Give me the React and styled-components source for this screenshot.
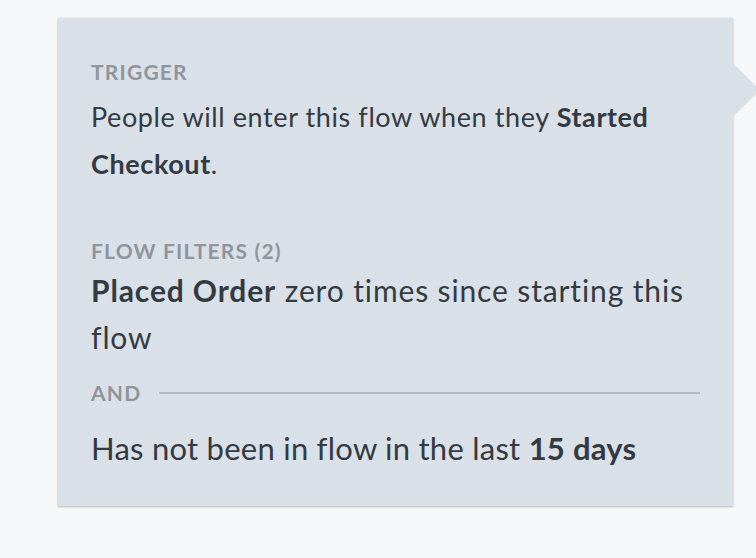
import React from 'react';
import styled, { createGlobalStyle } from 'styled-components';

const GlobalStyle = createGlobalStyle`
  html, body {
    margin: 0;
    padding: 0;
    background: #f6f7f9;
  }
  body {
    font-family: 'Lato', 'Open Sans', sans-serif;
    -webkit-font-smoothing: antialiased;
  }
`;

const Page = styled.div`
  width: 756px;
  height: 558px;
  box-sizing: border-box;
  padding: 18px 0 0 58px;
  overflow: hidden;
`;

// 툴팁 카드 (오른쪽 화살표 포함)
const Card = styled.div`
  position: relative;
  width: 675px;
  box-sizing: border-box;
  padding: 42px 33px 34px;
  background: #dae0e7;
  box-shadow: 0 1px 2px rgba(40, 50, 60, 0.28), 0 0 1px rgba(40, 50, 60, 0.12);
  color: #333a42;

  &::after {
    content: '';
    position: absolute;
    top: 45px;
    right: -27px;
    width: 0;
    height: 0;
    border-top: 27px solid transparent;
    border-bottom: 27px solid transparent;
    border-left: 27px solid #dae0e7;
  }
`;

const Label = styled.div`
  font-size: 21px;
  line-height: 24px;
  font-weight: 700;
  letter-spacing: 1.2px;
  color: #8e959c;
  text-transform: uppercase;
  margin-top: ${p => p.$top || 0}px;
`;

const Text = styled.p`
  margin: ${p => p.$top || 0}px 0 0;
  font-size: ${p => p.$size || 27}px;
  letter-spacing: ${p => p.$spacing || 0}px;
  line-height: 47px;
  font-weight: 400;

  b {
    font-weight: 700;
  }
`;

const Divider = styled.div`
  display: flex;
  align-items: center;
  gap: 18px;
  margin-top: 20px;

  &::after {
    content: '';
    flex: 1;
    height: 2px;
    background: #b3b9c0;
  }
`;

export default function App() {
  return (
    <>
      <GlobalStyle />
      <Page>
        <Card>
          <Label>Trigger</Label>
          <Text $top={9} $size={27} $spacing={0.6}>
            People will enter this flow when they <b>Started Checkout</b>.
          </Text>
          <Label $top={52}>Flow Filters (2)</Label>
          <Text $top={4} $size={30} $spacing={0.87}>
            <b>Placed Order</b> zero times since starting this flow
          </Text>
          <Divider>
            <Label>And</Label>
          </Divider>
          <Text $top={20} $size={31} $spacing={0.25}>
            Has not been in flow in the last <b>15 days</b>
          </Text>
        </Card>
      </Page>
    </>
  );
}
